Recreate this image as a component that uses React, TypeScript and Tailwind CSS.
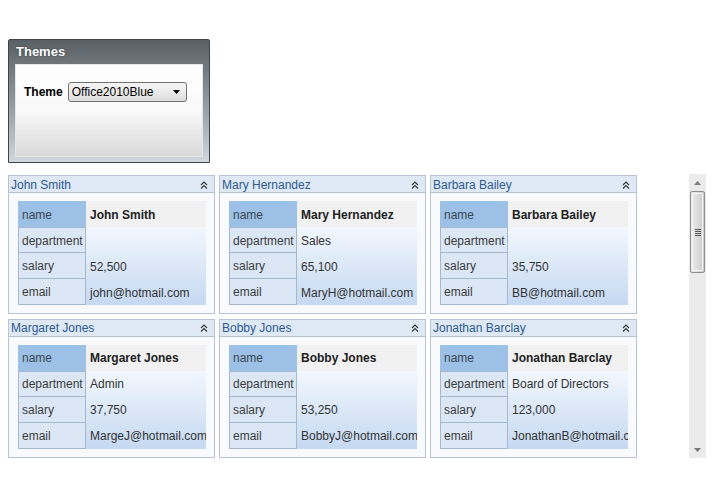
type Person = {
  name: string;
  department: string;
  salary: string;
  email: string;
};

const people: Person[] = [
  { name: "John Smith", department: "", salary: "52,500", email: "john@hotmail.com" },
  { name: "Mary Hernandez", department: "Sales", salary: "65,100", email: "MaryH@hotmail.com" },
  { name: "Barbara Bailey", department: "", salary: "35,750", email: "BB@hotmail.com" },
  { name: "Margaret Jones", department: "Admin", salary: "37,750", email: "MargeJ@hotmail.com" },
  { name: "Bobby Jones", department: "", salary: "53,250", email: "BobbyJ@hotmail.com" },
  { name: "Jonathan Barclay", department: "Board of Directors", salary: "123,000", email: "JonathanB@hotmail.com" },
];

function CollapseIcon() {
  return (
    <svg width="8" height="8" viewBox="0 0 8 8" className="text-[#3a3a3a]">
      <path d="M1 4 L4 1 L7 4" fill="none" stroke="currentColor" strokeWidth="1.2" />
      <path d="M1 7.5 L4 4.5 L7 7.5" fill="none" stroke="currentColor" strokeWidth="1.2" />
    </svg>
  );
}

function PersonCard({ person }: { person: Person }) {
  const rows = [
    ["department", person.department],
    ["salary", person.salary],
    ["email", person.email],
  ];
  return (
    <div className="flex h-[139px] w-[207px] flex-col border border-[#b6c4d5] bg-[#f8fafd]">
      <div className="flex h-[17px] items-center justify-between border-b border-[#b6c4d5] bg-[#dfe9f5] pl-[2px] pr-[6px] pt-px text-[#2c5990]">
        <span className="leading-none">{person.name}</span>
        <CollapseIcon />
      </div>
      <div className="pl-[9px] pt-[8px]">
        <div className="flex w-[188px]">
          <div className="flex w-[68px] flex-col">
            <div className="flex h-[26px] items-center bg-[#9dc1e6] pl-[4px] pt-px text-[#3a4654]">name</div>
            {rows.map(([label], i) => (
              <div
                key={label}
                className={
                  i === 0
                    ? "flex h-[26px] items-center border border-[#a6b8cf] bg-[#dbe7f5] pl-[3px] pt-px text-[#3c3c3c]"
                    : "flex h-[26px] items-center border border-t-0 border-[#a6b8cf] bg-[#dbe7f5] pl-[3px] pt-px text-[#3c3c3c]"
                }
              >
                {label}
              </div>
            ))}
          </div>
          <div className="flex w-[120px] flex-col overflow-hidden">
            <div className="flex h-[26px] items-center bg-[#f1f1f1] pl-[4px] pt-px font-bold whitespace-nowrap text-[#222]">
              {person.name}
            </div>
            <div className="flex flex-col bg-gradient-to-b from-[#f2f7fd] to-[#c5d9f2]">
              {rows.map(([label, value]) => (
                <div key={label} className="flex h-[26px] items-center pl-[4px] pt-px whitespace-nowrap text-[#333]">
                  {value}
                </div>
              ))}
            </div>
          </div>
        </div>
      </div>
    </div>
  );
}

function ScrollBar() {
  return (
    <div className="flex h-[284px] w-[17px] flex-col bg-[#ebebeb]">
      <div className="flex h-[17px] items-center justify-center">
        <svg width="7" height="4" viewBox="0 0 7 4">
          <path d="M0 4 L3.5 0 L7 4 Z" fill="#7a7a7a" />
        </svg>
      </div>
      <div className="mx-px h-[82px] rounded-[2px] border border-[#8e8e8e] bg-gradient-to-r from-[#ececec] via-[#dcdcdc] to-[#cacaca] p-px">
        <div className="flex h-full flex-col items-center justify-center gap-px rounded-[1px] border border-[#f6f6f6]">
          <div className="h-px w-[6px] bg-[#555]" />
          <div className="h-px w-[6px] bg-[#555]" />
          <div className="h-px w-[6px] bg-[#555]" />
          <div className="h-px w-[6px] bg-[#555]" />
        </div>
      </div>
      <div className="flex-1" />
      <div className="flex h-[17px] items-center justify-center">
        <svg width="7" height="4" viewBox="0 0 7 4">
          <path d="M0 0 L7 0 L3.5 4 Z" fill="#7a7a7a" />
        </svg>
      </div>
    </div>
  );
}

export default function App() {
  return (
    <div className="h-[500px] w-[715px] bg-white font-['Liberation_Sans',Arial,sans-serif] text-[12px]">
      <div className="pl-2 pt-[39px]">
        <div className="flex h-[124px] w-[202px] flex-col rounded-t-[2px] border border-[#3e4448] bg-gradient-to-b from-[#596166] via-[#8f989f] to-[#d0d7df] px-[6px] pb-[5px]">
          <div className="flex h-[24px] items-center pl-[1px] text-[13px] font-bold text-white [text-shadow:0_0_2px_rgba(0,0,0,0.5)]">
            Themes
          </div>
          <div className="flex-1 border border-[#e4e6e8] bg-gradient-to-b from-white via-[#f9f9f9] to-[#d9d9d9] pl-[8px] pt-[17px]">
            <div className="flex items-center gap-[5px]">
              <span className="font-bold text-black">Theme</span>
              <div className="flex h-[20px] w-[119px] items-center justify-between rounded-[3px] border border-[#707070] bg-gradient-to-b from-[#f4f4f4] via-[#ebebeb] to-[#dcdcdc] pl-[3px] pr-[6px] text-black">
                <span>Office2010Blue</span>
                <svg width="7" height="4" viewBox="0 0 7 4">
                  <path d="M0 0 L7 0 L3.5 4 Z" fill="#000" />
                </svg>
              </div>
            </div>
          </div>
        </div>
      </div>
      <div className="ml-2 mt-[11px] flex w-[698px] justify-between">
        <div className="grid grid-cols-[207px_207px_207px] gap-1 pt-px">
          {people.map((p) => (
            <PersonCard key={p.name} person={p} />
          ))}
        </div>
        <ScrollBar />
      </div>
    </div>
  );
}
